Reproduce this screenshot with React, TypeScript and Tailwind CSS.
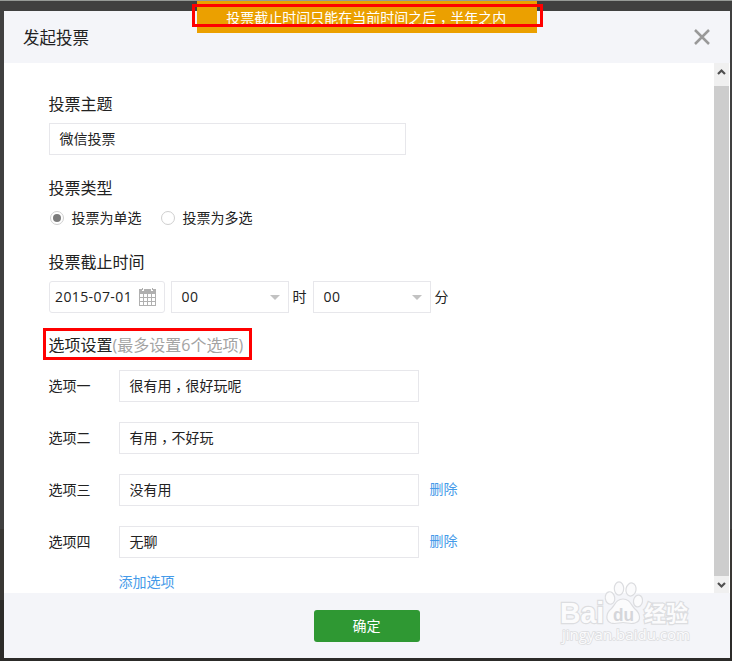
import React from "react";

const options = [
  { label: "选项一", value: "很有用，很好玩呢", removable: false },
  { label: "选项二", value: "有用，不好玩", removable: false },
  { label: "选项三", value: "没有用", removable: true },
  { label: "选项四", value: "无聊", removable: true },
];

// Sets full-width commas in the middle of their cell, near the baseline.
function Text({ children }: { children: string }) {
  const parts = children.split("，");
  return (
    <span>
      {parts.map((part, i) => (
        <React.Fragment key={i}>
          {i > 0 && (
            <span className="inline-block w-[1em] translate-y-[4px] font-['Noto_Sans_CJK_TC',sans-serif] leading-none">，</span>
          )}
          {part}
        </React.Fragment>
      ))}
    </span>
  );
}

function Field({ value, className }: { value: string; className: string }) {
  return (
    <div className={`flex h-8 items-center border border-[#e7e7eb] pl-[9.5px] leading-5 ${className}`}>
      <Text>{value}</Text>
    </div>
  );
}

function Select({ value }: { value: string }) {
  return (
    <div className="flex h-8 w-[118px] items-center justify-between border border-[#e7e7eb] pl-[9.5px] pr-[8px]">
      <span className="tracking-[0.4px]">{value}</span>
      <svg className="h-[5px] w-[10px]" viewBox="0 0 10 5">
        <path d="M0 0H10L5 5Z" fill="#c2c2c2" />
      </svg>
    </div>
  );
}

function Radio({ label, checked }: { label: string; checked?: boolean }) {
  return (
    <div className="flex h-5 items-center">
      <span className="flex size-[14px] items-center justify-center rounded-full border border-[#cfcfcf]">
        {checked && <span className="size-2 rounded-full bg-[#7b7b7b]" />}
      </span>
      <span className="ml-[7.5px]">{label}</span>
    </div>
  );
}

function Calendar() {
  return (
    <svg className="h-[18px] w-[17px]" viewBox="0 0 17 18" shapeRendering="crispEdges">
      <path fill="#b0b0b0" d="M0 1H3V3H5V1H12V3H14V1H17V18H0Z" />
      <path fill="#b0b0b0" d="M3 0H4V2H3ZM13 0H14V2H13Z" />
      <path
        fill="#fff"
        d="M1 6H4V9H1ZM5 6H8V9H5ZM9 6H12V9H9ZM13 6H16V9H13ZM1 10H4V13H1ZM5 10H8V13H5ZM9 10H12V13H9ZM13 10H16V13H13ZM1 14H4V17H1ZM5 14H8V17H5ZM9 14H12V17H9ZM13 14H16V17H13Z"
      />
    </svg>
  );
}

function Watermark() {
  return (
    <svg
      className="absolute left-[556px] top-[578px] h-[70px] w-[140px]"
      viewBox="0 0 140 70"
      fill="#fbfbfc"
      stroke="#dcdde0"
      strokeWidth="1.2"
    >
      <g fontFamily="'Liberation Sans','Noto Sans CJK SC',sans-serif" paintOrder="stroke" strokeWidth="2.4">
        <text x="4" y="44" fontSize="30" fontWeight="bold" textLength="44" lengthAdjust="spacingAndGlyphs">Bai</text>
        <text x="88" y="42" fontSize="22" fontWeight="bold" textLength="44" lengthAdjust="spacingAndGlyphs">经验</text>
      </g>
      <ellipse cx="54" cy="19" rx="4.7" ry="6.3" transform="rotate(-10 54 19)" />
      <ellipse cx="63" cy="9.5" rx="4.7" ry="6.6" />
      <ellipse cx="75" cy="10.5" rx="5" ry="6.6" transform="rotate(12 75 10.5)" />
      <ellipse cx="82" cy="22" rx="4.5" ry="6" transform="rotate(10 82 22)" />
      <path d="M67 20C74 20 75 26 79 30C84 34 86 42 79 44C74 45.500 71 43.500 67 43.500C63 43.500 60 45.500 55 44C49 42 50 34 55 30C59 26 60 20 67 20Z" />
      <text x="57" y="42" fontFamily="'Liberation Sans',sans-serif" fontSize="19" fontWeight="bold" fill="#d5d6da" stroke="none" textLength="21" lengthAdjust="spacingAndGlyphs">du</text>
      <text x="6" y="61" fontFamily="'Open Sans',sans-serif" fontSize="15" paintOrder="stroke" strokeWidth="1.6" textLength="128" lengthAdjust="spacingAndGlyphs">jingyan.baidu.com</text>
    </svg>
  );
}

export default function App() {
  return (
    <div className="relative flex h-[661px] w-[732px] flex-col overflow-hidden border-t border-[#969a97] bg-[linear-gradient(#404040_0_528px,#393734_528px_599px,#2c2b29_599px)] pb-[3px] pl-1 pr-0.5 pt-2.5 font-['Open_Sans','Noto_Sans_CJK_SC',sans-serif] text-[14px] leading-5 text-[#222]">
      <div className="flex h-[647px] w-[726px] flex-col bg-white">
        <header className="flex h-[52px] shrink-0 items-center justify-between bg-[#f4f5f9] pl-[19px] pr-[20px]">
          <h1 className="pt-0.5 text-[16.5px] leading-6">发起投票</h1>
          <svg className="h-4 w-4" viewBox="0 0 16 16" stroke="#999" strokeWidth="2.5">
            <path d="M1 1L15 15M15 1L1 15" />
          </svg>
        </header>

        <div className="flex h-[530px] shrink-0">
          <main className="flex w-[710px] flex-col pl-[45px] pt-[29px]">
            <h2 className="-ml-[0.5px] h-[31px] text-[16px] leading-6">投票主题</h2>
            <Field value="微信投票" className="w-[357px]" />

            <h2 className="-ml-[0.5px] mt-[21px] text-[16px] leading-6">投票类型</h2>
            <div className="mt-[8px] flex gap-[19.5px] pl-px">
              <Radio label="投票为单选" checked />
              <Radio label="投票为多选" />
            </div>

            <h2 className="-ml-[0.5px] mt-[22px] text-[16px] leading-6">投票截止时间</h2>
            <div className="mt-[7px] flex h-8 items-center">
              <div className="flex h-8 w-[116px] items-center justify-between rounded-[3px] border border-[#e7e7eb] pl-[5px] pr-[8px]">
                <span className="tracking-[0.4px]">2015-07-01</span>
                <Calendar />
              </div>
              <div className="ml-1.5">
                <Select value="00" />
              </div>
              <span className="w-6 pl-[3.5px]">时</span>
              <Select value="00" />
              <span className="pl-[3.5px]">分</span>
            </div>

            <div className="-ml-1.5 mt-[15px] flex h-8 w-[209px] shrink-0 items-center whitespace-nowrap border-3 border-[#f00] pl-[2.5px] pt-0.5 text-[16px] leading-6">
              选项设置<span className="text-[#a3a3a3]">(最多设置6个选项)</span>
            </div>

            <div className="mt-2.5 flex flex-col gap-5">
              {options.map((option) => (
                <div key={option.label} className="flex h-8 items-center">
                  <span className="-ml-[0.5px] w-[70.5px]">{option.label}</span>
                  <Field value={option.value} className="w-[300px]" />
                  {option.removable && <a className="ml-[10.5px] pb-0.5 text-[#459ae9]">删除</a>}
                </div>
              ))}
            </div>
            <a className="ml-[69.5px] mt-[14px] text-[#459ae9]">添加选项</a>
          </main>

          <div className="flex w-[15px] flex-col items-center bg-[#f0f0f0]">
            <svg className="h-[23px] w-[15px] shrink-0" viewBox="0 0 15 23" fill="none" stroke="#505050" strokeWidth="2.2">
              <path d="M4 11L7.5 7.5L11 11" />
            </svg>
            <div className="h-[490px] w-full bg-[#cdcdcd]" />
            <svg className="h-[17px] w-[15px] shrink-0" viewBox="0 0 15 17" fill="none" stroke="#505050" strokeWidth="2.2">
              <path d="M4 7L7.5 10.5L11 7" />
            </svg>
          </div>
        </div>

        <footer className="flex grow justify-center bg-[#f4f5f9] pt-[17px]">
          <button className="h-8 w-[106px] rounded-[3px] bg-[#2f9833] pr-px text-white">确定</button>
        </footer>
      </div>

      <div className="absolute left-[197px] top-0 flex h-8 w-[340px] items-center justify-center bg-[#eba000] pr-[1.5px] pt-0.5 text-white">
        <Text>投票截止时间只能在当前时间之后，半年之内</Text>
      </div>
      <div className="absolute left-[192px] top-[3px] h-[23px] w-[351px] border-3 border-[#f00]" />
      <Watermark />
    </div>
  );
}
